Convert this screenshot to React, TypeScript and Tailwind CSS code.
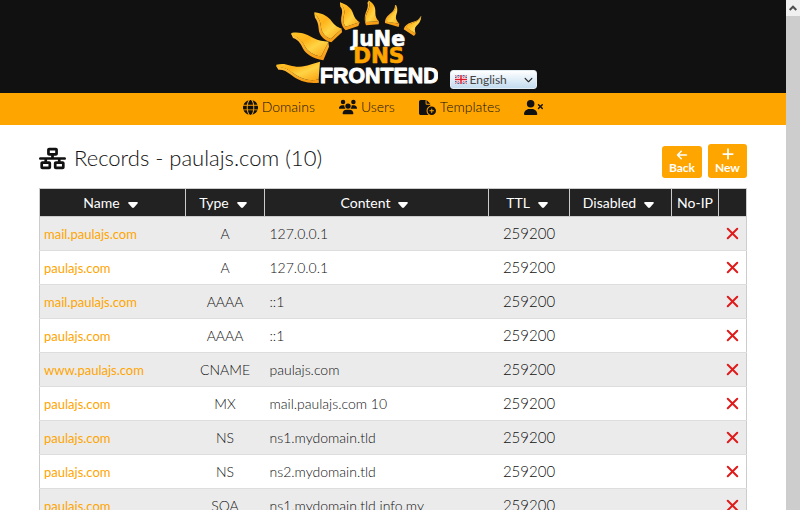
import { X } from "lucide-react";
import {
  FaArrowLeft,
  FaChevronDown,
  FaFileCirclePlus,
  FaGlobe,
  FaNetworkWired,
  FaPlus,
  FaUsers,
  FaUserXmark,
} from "react-icons/fa6";

type DnsRecord = { name: string; type: string; content: string; ttl: number };

const records: DnsRecord[] = [
  { name: "mail.paulajs.com", type: "A", content: "127.0.0.1", ttl: 259200 },
  { name: "paulajs.com", type: "A", content: "127.0.0.1", ttl: 259200 },
  { name: "mail.paulajs.com", type: "AAAA", content: "::1", ttl: 259200 },
  { name: "paulajs.com", type: "AAAA", content: "::1", ttl: 259200 },
  { name: "www.paulajs.com", type: "CNAME", content: "paulajs.com", ttl: 259200 },
  { name: "paulajs.com", type: "MX", content: "mail.paulajs.com 10", ttl: 259200 },
  { name: "paulajs.com", type: "NS", content: "ns1.mydomain.tld", ttl: 259200 },
  { name: "paulajs.com", type: "NS", content: "ns2.mydomain.tld", ttl: 259200 },
  { name: "paulajs.com", type: "SOA", content: "ns1.mydomain.tld info.my", ttl: 259200 },
];

const columns = [
  { label: "Name", width: "w-[146px]", sortable: true },
  { label: "Type", width: "w-[79px]", sortable: true },
  { label: "Content", width: "", sortable: true },
  { label: "TTL", width: "w-[81px]", sortable: true },
  { label: "Disabled", width: "w-[102px]", sortable: true },
  { label: "No-IP", width: "w-[47px]", sortable: false },
  { label: "", width: "w-[28px]", sortable: false },
];

// Each ray has a lit face and a darker side edge.
const rays = [
  {
    face: "M49 194 C78 186 92 201 118 200 C142 199 158 190 180 185 L176 238 C150 246 122 236 100 220 C84 207 72 202 49 200 Z",
    edge: "M49 199 C72 202 84 207 100 220 C122 236 150 246 176 238 L177 248 C147 252 116 244 95 226 C80 213 68 208 55 209 Z",
  },
  {
    face: "M94 99 C124 94 142 105 160 114 C176 122 190 124 206 125 L184 169 C160 167 142 153 134 138 C126 121 112 109 94 104 Z",
    edge: "M94 103 C112 109 126 121 134 138 C142 153 160 167 184 169 L205 127 L207 140 L190 181 C158 176 137 162 128 144 C121 128 111 117 99 114 Z",
  },
  {
    face: "M163 37 C190 40 205 50 216 65 C226 78 235 82 246 86 L212 117 C195 111 185 98 183 82 C182 65 176 51 163 42 Z",
    edge: "M163 41 C176 51 182 65 183 82 C185 98 195 111 212 117 L245 87 L246 97 L214 127 C190 121 177 104 176 86 C175 70 171 60 165 53 Z",
  },
  {
    face: "M240 7 C261 14 274 24 279 40 C284 55 290 61 299 67 L257 80 C249 70 248 58 252 45 C256 30 250 18 240 11 Z",
    edge: "M240 10 C250 18 256 30 252 45 C248 58 249 70 257 80 L299 67 L295 78 L257 91 C244 79 241 62 245 46 C248 33 246 24 241 20 Z",
  },
  {
    face: "M326 1 C343 12 347 24 346 38 C346 50 350 57 357 64 L317 66 C315 53 318 43 324 32 C330 19 330 9 326 4 Z",
    edge: "M326 3 C330 9 330 19 324 32 C318 43 315 53 317 66 L357 64 L356 73 L318 76 C312 61 314 45 319 34 C325 20 324 12 322 9 Z",
  },
  {
    face: "M408 15 C415 28 411 39 408 48 C406 57 411 64 418 71 L380 65 C380 54 389 48 397 39 C405 31 408 23 408 15 Z",
    edge: "M405 15 C405 24 402 31 394 38 C383 47 374 55 375 69 L416 81 L418 71 L381 65 C383 54 390 48 398 39 C406 30 408 23 408 16 Z",
  },
  {
    face: "M484 48 C483 63 476 72 469 78 C463 84 464 91 467 101 L438 82 C443 73 453 71 463 67 C474 63 481 57 484 48 Z",
    edge: "M481 50 C477 58 471 62 460 65 C446 69 434 75 431 88 L462 108 L467 101 L439 82 C444 74 453 71 463 67 C474 63 481 57 484 48 Z",
  },
];

function Logo() {
  return (
    <svg viewBox="42 0 492 279" width="164" height="93" role="img" aria-label="JuNe DNS Frontend">
      <defs>
        <linearGradient id="ray" x1="0" y1="0" x2="1" y2="1">
          <stop offset="0" stopColor="#ffc629" />
          <stop offset="0.35" stopColor="#ffb31a" />
          <stop offset="0.6" stopColor="#ffd445" />
          <stop offset="1" stopColor="#fba00f" />
        </linearGradient>
        <linearGradient id="edge" x1="0" y1="0" x2="0" y2="1">
          <stop offset="0" stopColor="#ffc03a" />
          <stop offset="1" stopColor="#f79a12" />
        </linearGradient>
      </defs>
      {rays.map((ray) => (
        <g key={ray.face}>
          <path d={ray.edge} fill="url(#edge)" />
          <path d={ray.face} fill="url(#ray)" />
        </g>
      ))}
      <g textAnchor="middle" fontWeight="700" strokeLinejoin="round">
        <text x="355" y="137" fontSize="62" fontFamily="'DejaVu Sans', sans-serif" fill="#fff" stroke="#fff" strokeWidth="2">
          JuNe
        </text>
        <text x="356" y="190" fontSize="64" fontFamily="'DejaVu Sans', sans-serif" fill="#ffa500" stroke="#ffa500" strokeWidth="2">
          DNS
        </text>
        <text x="358" y="249" fontSize="64" fontFamily="'Liberation Sans', sans-serif" fill="#fff" stroke="#fff" strokeWidth="3">
          FRONTEND
        </text>
      </g>
    </svg>
  );
}

function Flag() {
  return (
    <svg viewBox="0 0 24 18" width="12" height="9" aria-hidden="true" className="block">
      <path fill="#4767a5" d="M0 0h24v18H0z" />
      <path stroke="#fff" strokeWidth="4" d="m0 0 24 18M24 0 0 18" />
      <path stroke="#d8283a" strokeWidth="1.5" d="m0 0 24 18M24 0 0 18" />
      <path stroke="#fff" strokeWidth="6" d="M12 0v18M0 9h24" />
      <path stroke="#e0182c" strokeWidth="3" d="M12 0v18M0 9h24" />
    </svg>
  );
}

function SortCaret() {
  return (
    <svg viewBox="0 0 10 6" width="10" height="6" fill="#fff" aria-hidden="true" className="mt-1">
      <path d="M1 0h8q1.300.5.5 1.500L6 5.500q-1 .8-2 0L.5 1.500Q-.3.500 1 0Z" />
    </svg>
  );
}

function LanguageSelect() {
  return (
    <div className="relative mb-1 h-[19px] w-[87px]">
      <select
        aria-label="Language"
        defaultValue="en"
        className="block h-full w-full appearance-none rounded-[3px] border border-[#e4edf4] bg-linear-to-b from-white to-[#c3dcf0] pl-[19px] text-xs leading-4 font-normal text-[#444]"
      >
        <option value="en">English</option>
      </select>
      <span className="pointer-events-none absolute top-[5px] left-[5px]">
        <Flag />
      </span>
      <FaChevronDown className="pointer-events-none absolute top-[5px] right-1 size-[9px] text-[#222]" />
    </div>
  );
}

function Nav() {
  return (
    <nav className="flex h-8 items-center justify-center gap-6 bg-[#ffa500] pb-1 text-sm text-[#111]">
      <a href="#domains" className="flex items-center gap-1">
        <FaGlobe className="size-[15px]" />
        Domains
      </a>
      <a href="#users" className="flex items-center gap-1">
        <FaUsers className="size-[18px]" />
        Users
      </a>
      <a href="#templates" className="flex items-center gap-1">
        <FaFileCirclePlus className="size-[17px]" />
        Templates
      </a>
      <a href="#logout" aria-label="Log out">
        <FaUserXmark className="size-[19px]" />
      </a>
    </nav>
  );
}

function RecordsTable() {
  return (
    <table className="w-full table-fixed border-collapse border border-[#ccc] text-sm text-[#111]">
      <thead>
        <tr className="h-7 bg-[#222] text-white">
          {columns.map((column) => (
            <th key={column.label} className={`border border-[#ccc] p-0 font-normal ${column.width}`}>
              {column.sortable ? (
                <button type="button" className="inline-flex items-center gap-2 pr-1 align-middle">
                  {column.label}
                  <SortCaret />
                </button>
              ) : (
                column.label
              )}
            </th>
          ))}
        </tr>
      </thead>
      <tbody>
        {records.map((record, index) => (
          <tr key={index} className="h-[34px] border-b border-[#ddd] odd:bg-[#ebebeb]">
            <td className="p-0 pl-1">
              <a href="#record" className="text-[13px] font-normal text-[#ffa500]">
                {record.name}
              </a>
            </td>
            <td className="p-0 text-center">{record.type}</td>
            <td className="p-0 pl-[5px] whitespace-nowrap">{record.content}</td>
            <td className="p-0 text-center text-[15px]">{record.ttl}</td>
            <td />
            <td />
            <td className="p-0">
              <button type="button" aria-label="Delete record" className="mx-auto block text-[#e01b1b]">
                <X className="size-[19px]" strokeWidth={2.5} />
              </button>
            </td>
          </tr>
        ))}
      </tbody>
    </table>
  );
}

export default function App() {
  return (
    <div className="flex h-screen overflow-hidden bg-white font-['Lato','Liberation_Sans',sans-serif] font-light">
      <div className="min-w-0 flex-1 overflow-hidden">
        <header className="flex h-[93px] items-end justify-center gap-3 bg-[#111] pl-6">
          <Logo />
          <LanguageSelect />
        </header>
        <Nav />
        <main className="px-[39px] pt-[19px]">
          <div className="mb-[10px] flex items-start justify-between">
            <h1 className="flex items-center gap-2 text-[22px] leading-7 text-[#111]">
              <FaNetworkWired className="size-[27px]" />
              Records - paulajs.com (10)
            </h1>
            <div className="flex items-end gap-1.5 text-xs leading-[14px] font-bold text-white">
              <button type="button" className="flex h-8 w-10 flex-col items-center justify-center rounded-[3px] bg-[#ffa500]">
                <FaArrowLeft className="size-3" />
                Back
              </button>
              <button type="button" className="flex h-[34px] w-[39px] flex-col items-center justify-center rounded-[3px] bg-[#ffa500]">
                <FaPlus className="size-[14px]" />
                New
              </button>
            </div>
          </div>
          <RecordsTable />
        </main>
      </div>
      <div className="flex w-[14px] flex-col bg-[#cdcdcd]">
        <button type="button" aria-label="Scroll up" className="flex h-4 items-center justify-center bg-[#f0f0f0]">
          <svg viewBox="0 0 8 6" width="8" height="6" fill="none" stroke="#505050" strokeWidth="2" aria-hidden="true">
            <path d="m.7 5 3.300-3.300L7.300 5" />
          </svg>
        </button>
      </div>
    </div>
  );
}
